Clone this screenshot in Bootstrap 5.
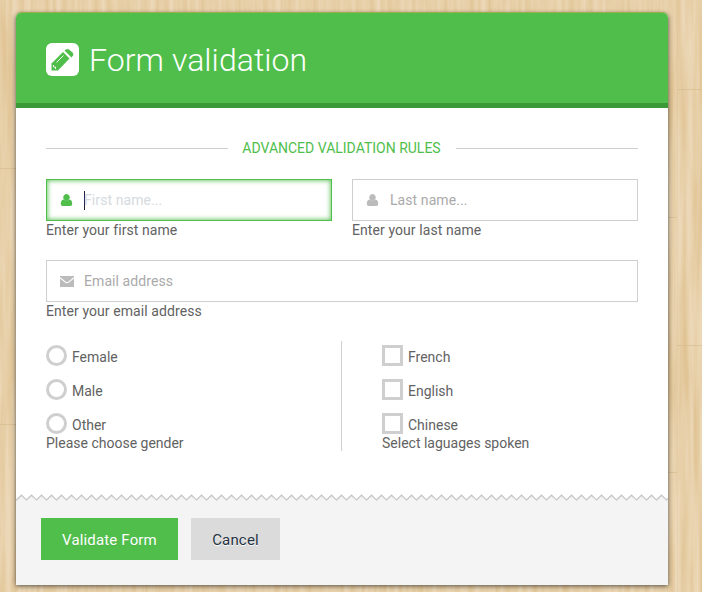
<!DOCTYPE html>
<html lang="en">
<head>
<meta charset="utf-8">
<meta name="viewport" content="width=device-width, initial-scale=1">
<title>Form validation</title>
<link href="https://cdn.jsdelivr.net/npm/bootstrap@5.3.0/dist/css/bootstrap.min.css" rel="stylesheet">
<style>
html, body { height: 592px; overflow: hidden; }
body { font: 400 14px/18px Roboto, sans-serif; color: #626262; background: #e9d3b0; }
.wood { position: absolute; inset: 0; z-index: -1; }
.smart-form { width: 652px; margin: 13px 0 0 16px; height: 572px; border-radius: 5px 5px 0 0; background: #fff; box-shadow: 0 -1px 0 #9bb04f, 0 1px 5px rgba(0,0,0,.65); }
.form-header { height: 95px; padding: 0 30px; background: #50be4b; border-bottom: 5px solid #3b9a37; border-radius: 5px 5px 0 0; color: #fff; }
.form-header svg { margin-top: 2px; }
.form-header h4 { font-size: 32px; font-weight: 300; line-height: 40px; margin: 4px 0 0 10px; letter-spacing: .07px; }
.form-content { height: 387px; padding: 31px 30px 0; }
.section-line { height: 18px; margin-bottom: 22px; color: #50be4b; }
.section-line span { margin: 0 15px 0 14px; }
.section-line::before, .section-line::after { content: ""; flex: 1; height: 1px; background: #cfcfcf; }
.field-row { gap: 20px; margin-bottom: 20px; }
.field-box { height: 42px; border: 1px solid #cfcfcf; color: #aaa; }
.field-box svg { width: 37px; flex: none; fill: #bbb; }
.field-box.active { border-color: #50be4b; box-shadow: inset 0 0 4px 1px rgba(80,190,75,.8); color: #d5dae0; }
.field-box.active svg { fill: #50be4b; }
.field-box .form-control { font: inherit; border: 0; border-radius: 0; padding: 0; height: 40px; background: transparent; box-shadow: none; color: inherit; letter-spacing: .08px; }
.field-box .form-control::placeholder { color: inherit; opacity: 1; }
.caret { width: 1px; height: 19px; background: #223; margin-right: -1px; flex: none; }
.hint { height: 19px; letter-spacing: .08px; }
.choices { height: 110px; padding-top: 4px; }
.choices:first-child { width: 295px; }
.choices + .choices { border-left: 1px solid #cfcfcf; padding-left: 40px; }
.choice { height: 21px; margin-bottom: 13px; }
.choice:nth-child(3) { margin-bottom: 0; }
.choice .form-check-input { width: 21px; height: 21px; margin: 0; border: 3px solid #cfcfcf; flex: none; }
.choice .form-check-input[type=checkbox] { border-radius: 0; }
.choice label { padding: 3px 0 0 5px; }
.form-footer { height: 90px; background: #f4f4f4; padding: 23px 25px 0; gap: 13px; position: relative; }
.zigzag { position: absolute; left: 0; top: -1px; }
.form-footer .btn { height: 42px; font-size: 15px; line-height: 20px; border: 0; border-radius: 0; padding: 1px 0 0; letter-spacing: .16px; }
.form-footer .btn-validate, .btn-validate:hover { width: 137px; background: #50be4b; color: #fff; text-shadow: 0 1px rgba(0,0,0,.08); }
.form-footer .btn-cancel, .btn-cancel:hover { width: 89px; background: #dbdbdb; color: #243140; text-shadow: 0 1px #fff; }
</style>
</head>
<body>
<svg class="wood" width="702" height="592" aria-hidden="true">
  <filter id="grain" x="0" y="0" width="100%" height="100%" color-interpolation-filters="sRGB"><feTurbulence type="fractalNoise" baseFrequency=".16 .007" numOctaves="3" seed="8"/><feColorMatrix values="0 0 0 0 .87  0 0 0 0 .75  0 0 0 0 .55  1.5 0 0 0 -.4"/></filter>
  <rect width="702" height="592" fill="#ecd8b8"/>
  <rect width="702" height="592" filter="url(#grain)"/>
  <path d="M0 168.500H16M0 424.500H16M677 89.500H702M677 345.500H702M668 217.500H677M668 472.500H677" stroke="#d8bd91" opacity=".7"/>
  <path d="M677.500 0V592" stroke="#dfc79f" opacity=".4"/>
</svg>
<main class="smart-form">
  <header class="form-header d-flex align-items-center">
    <svg width="33" height="33" viewBox="0 0 33 33" aria-hidden="true"><rect width="33" height="33" rx="6" fill="#fff"/><g fill="#50be4b"><path d="M5.500 27.500V20.500L17 9L23.500 15.500L12 27.500Z"/><path d="M18.500 7.500L20 6.500Q21.500 5.500 23 6.500L26.500 9.500Q28 11 27 12.500L25.500 14.500Z"/></g><path d="M10.500 19.500L17.500 12.500M7.500 22V24H9.500V26" fill="none" stroke="#fff" stroke-width=".9"/></svg>
    <h4>Form validation</h4>
  </header>
  <form class="form-content">
    <div class="section-line d-flex align-items-center"><span>ADVANCED VALIDATION RULES</span></div>
    <div class="field-row d-flex">
      <div class="flex-fill">
        <div class="field-box active d-flex align-items-center">
          <svg width="37" height="14" viewBox="0 0 37 14"><path d="M19.500 1A3.300 3.300 0 1 1 19.490 1ZM16.600 6.400Q19.500 8.800 22.400 6.400C24.600 6.600 25.200 8.800 25.200 11.200Q25.200 13 23.300 13H15.700Q13.800 13 13.800 11.200C13.800 8.800 14.400 6.600 16.600 6.400Z"/></svg>
          <span class="caret"></span><input class="form-control" placeholder="First name..." aria-label="First name">
        </div>
        <div class="hint">Enter your first name</div>
      </div>
      <div class="flex-fill">
        <div class="field-box d-flex align-items-center">
          <svg width="37" height="14" viewBox="0 0 37 14"><path d="M19.500 1A3.300 3.300 0 1 1 19.490 1ZM16.600 6.400Q19.500 8.800 22.400 6.400C24.600 6.600 25.200 8.800 25.200 11.200Q25.200 13 23.300 13H15.700Q13.800 13 13.800 11.200C13.800 8.800 14.400 6.600 16.600 6.400Z"/></svg>
          <input class="form-control" placeholder="Last name..." aria-label="Last name">
        </div>
        <div class="hint">Enter your last name</div>
      </div>
    </div>
    <div class="field-row">
      <div class="field-box d-flex align-items-center">
        <svg width="37" height="14" viewBox="0 0 37 14"><path d="M13 2H27V3L21.500 7.500Q20 8.600 18.500 7.500L13 3ZM13 4.500L18 8.500Q20 10 22 8.500L27 4.500V13H13Z"/></svg>
        <input class="form-control" placeholder="Email address" aria-label="Email address">
      </div>
      <div class="hint">Enter your email address</div>
    </div>
    <div class="row g-0">
      <div class="col-auto choices">
        <div class="choice d-flex"><input class="form-check-input" type="radio" name="gender" id="female"><label for="female">Female</label></div>
        <div class="choice d-flex"><input class="form-check-input" type="radio" name="gender" id="male"><label for="male">Male</label></div>
        <div class="choice d-flex"><input class="form-check-input" type="radio" name="gender" id="other"><label for="other">Other</label></div>
        <div>Please choose gender</div>
      </div>
      <div class="col choices">
        <div class="choice d-flex"><input class="form-check-input" type="checkbox" id="french"><label for="french">French</label></div>
        <div class="choice d-flex"><input class="form-check-input" type="checkbox" id="english"><label for="english">English</label></div>
        <div class="choice d-flex"><input class="form-check-input" type="checkbox" id="chinese"><label for="chinese">Chinese</label></div>
        <div>Select laguages spoken</div>
      </div>
    </div>
  </form>
  <footer class="form-footer d-flex">
    <svg class="zigzag" width="652" height="8" aria-hidden="true"><defs><pattern id="teeth" width="10" height="8" patternUnits="userSpaceOnUse"><rect width="10" height="8" fill="#f4f4f4"/><path d="M0 0V6L5.500 1L10.500 6V0Z" fill="#fff"/><path d="M-1 5L.5 6L5.500 1.200L10.500 6" fill="none" stroke="#c6c6c6" stroke-width="1.200"/></pattern></defs><rect width="652" height="8" fill="url(#teeth)"/></svg>
    <button class="btn btn-validate">Validate Form</button>
    <button class="btn btn-cancel">Cancel</button>
  </footer>
</main>
<script src="https://cdn.jsdelivr.net/npm/bootstrap@5.3.0/dist/js/bootstrap.bundle.min.js"></script>
</body>
</html>
